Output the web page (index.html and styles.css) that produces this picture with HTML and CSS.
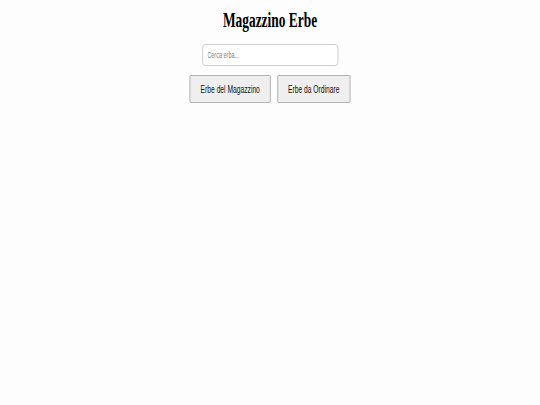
FILE: index.html
```html
<!DOCTYPE html>
<html lang="it">
<head>
<meta charset="utf-8">
<title>Magazzino Erbe</title>
<link rel="stylesheet" href="styles.css">
</head>
<body>
<main class="app">
  <h1 class="title">Magazzino Erbe</h1>
  <input class="search" type="text" placeholder="Cerca erba...">
  <div class="tabs">
    <button class="tab" type="button">Erbe del Magazzino</button>
    <button class="tab" type="button">Erbe da Ordinare</button>
  </div>
</main>
</body>
</html>
```
FILE: styles.css
```css
html, body {
  margin: 0;
  padding: 0;
  background: #fdfdfd;
}

body {
  width: 540px;
  height: 405px;
  font-family: "Liberation Sans", Arial, sans-serif;
}

.app {
  display: flex;
  flex-direction: column;
  align-items: center;
  padding-top: 8px;
  transform: scaleX(0.67);
  transform-origin: 270px 0;
}

.title {
  margin: 0;
  font-family: "Liberation Serif", "Times New Roman", serif;
  font-weight: bold;
  font-size: 20px;
  line-height: 24px;
  color: #000;
}

.search {
  box-sizing: border-box;
  margin: 12px 0 0;
  width: 203px;
  height: 22px;
  padding: 0 7px;
  border: 1px solid #c4c4c4;
  border-radius: 4px;
  background: #fff;
  font-family: "Liberation Sans", Arial, sans-serif;
  font-size: 8.2px;
  color: #333;
  outline: none;
}

.search::placeholder {
  color: #808080;
}

.tabs {
  display: flex;
  gap: 10px;
  margin-top: 9px;
}

.tab {
  box-sizing: border-box;
  height: 28px;
  padding: 0 15px;
  border: 1px solid #a3a3a3;
  border-radius: 2px;
  background: #efefef;
  font-family: "Liberation Sans", Arial, sans-serif;
  font-size: 10px;
  color: #111;
}
```
